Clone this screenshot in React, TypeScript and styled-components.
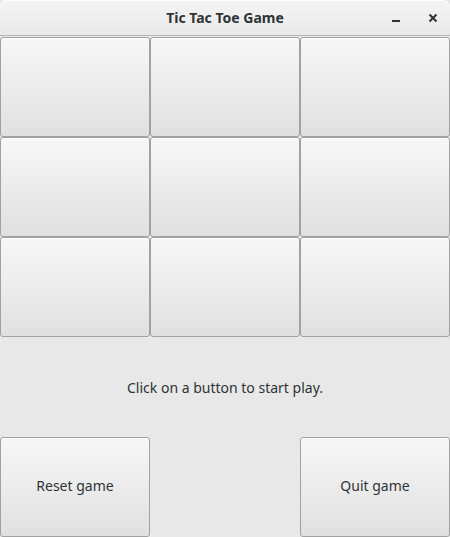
import styled, { createGlobalStyle } from "styled-components"

const Global = createGlobalStyle`
  html, body { margin: 0; padding: 0; background: #e8e8e8; }
  body { font-family: "Noto Sans", "Open Sans", "DejaVu Sans", sans-serif; }
`

const App = () => {
  return (
    <Window>
      <Global />
      <TitleBar>
        <Title>Tic Tac Toe Game</Title>
        <Controls>
          <Ctrl aria-label="minimize">
            <svg width="10" height="10" viewBox="0 0 10 10">
              <rect x="1" y="7" width="8" height="2" fill="#2e3436" />
            </svg>
          </Ctrl>
          <Ctrl aria-label="close">
            <svg width="10" height="10" viewBox="0 0 10 10">
              <path d="M1.5 1.5 L8.5 8.5 M8.5 1.5 L1.5 8.5" stroke="#2e3436" strokeWidth="2" />
            </svg>
          </Ctrl>
        </Controls>
      </TitleBar>
      <Board>
        {Array.from({ length: 9 }).map((_, i) => (
          <Cell key={i} />
        ))}
      </Board>
      <Status>Click on a button to start play.</Status>
      <Footer>
        <Cell>Reset game</Cell>
        <span />
        <Cell>Quit game</Cell>
      </Footer>
    </Window>
  )
}

export default App

const Window = styled.div`
  width: 450px;
  height: 537px;
  background: #e8e8e8;
  display: flex;
  flex-direction: column;
  overflow: hidden;
`

const TitleBar = styled.div`
  height: 35px;
  flex-shrink: 0;
  position: relative;
  display: flex;
  align-items: center;
  justify-content: center;
  background: linear-gradient(#f4f4f4, #e9e9e9);
  border-bottom: 1px solid #b6b6b3;
  border-radius: 7px 7px 0 0;
  box-shadow: inset 0 1px 0 #ffffff;
`

const Title = styled.div`
  font-size: 14px;
  font-weight: bold;
  color: #2e3436;
`

const Controls = styled.div`
  position: absolute;
  right: 11px;
  top: 0;
  height: 35px;
  display: flex;
  align-items: center;
  gap: 25px;
`

const Ctrl = styled.div`
  width: 12px;
  height: 12px;
  display: flex;
  align-items: center;
  justify-content: center;
`

const Board = styled.div`
  margin-top: 1px;
  display: grid;
  grid-template-columns: repeat(3, 150px);
  grid-template-rows: repeat(3, 100px);
`

const Cell = styled.button`
  box-sizing: border-box;
  width: 150px;
  height: 100px;
  margin: 0;
  padding: 0 0 4px;
  border: 1px solid #a1a1a1;
  border-radius: 3px;
  background: linear-gradient(#f7f7f7, #e0e0e0);
  box-shadow: inset 0 1px 0 #ffffff;
  font-family: "Noto Sans", "Open Sans", "DejaVu Sans", sans-serif;
  font-size: 14px;
  color: #2e3436;
`

const Status = styled.div`
  height: 100px;
  display: flex;
  align-items: center;
  justify-content: center;
  font-size: 14px;
  color: #2e3436;
`

const Footer = styled.div`
  display: grid;
  grid-template-columns: repeat(3, 150px);
`
